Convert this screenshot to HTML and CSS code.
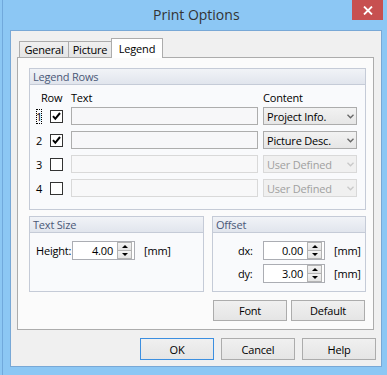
FILE: index.html
```html
<!DOCTYPE html>
<html lang="en">
  <head>
    <meta charset="UTF-8" />
    <title>Print Options</title>
    <link rel="stylesheet" href="styles.css">
  </head>
  <body>
    <div class="window">
      <div class="titlebar">
        <span class="titlebar__title">Print Options</span>
        <div class="titlebar__close">
          <svg width="10" height="9" viewBox="0 0 10 9">
            <path d="M1 0.5 L9 8.5 M9 0.5 L1 8.5" stroke="#fff" stroke-width="1.8" />
          </svg>
        </div>
      </div>

      <div class="client">
        <div class="tabs">
          <div class="tab tab--general">General</div>
          <div class="tab tab--picture">Picture</div>
          <div class="tab tab--legend tab--active">Legend</div>
        </div>

        <div class="pane">
          <!-- legend rows -->
          <div class="group group--rows">
            <div class="group__head">Legend Rows</div>
            <div class="rows">
              <div class="rows__head">
                <span class="rows__h-row">Row</span>
                <span class="rows__h-text">Text</span>
                <span>Content</span>
              </div>
              <div class="rows__list">
                <div class="row">
                  <div class="row__num"><span class="row__focus">1</span></div>
                  <div class="check">
                    <svg width="11" height="11" viewBox="0 0 11 11">
                      <path d="M2 5.2 L4.3 7.8 L9 2" fill="none" stroke="#000" stroke-width="2" />
                    </svg>
                  </div>
                  <div class="input"></div>
                  <div class="select">
                    <span>Project Info.</span>
                    <svg width="7" height="5" viewBox="0 0 7 5">
                      <path d="M0.5 0.8 L3.5 3.8 L6.5 0.8" fill="none" stroke="#666" stroke-width="1.3" />
                    </svg>
                  </div>
                </div>
                <div class="row">
                  <div class="row__num">2</div>
                  <div class="check">
                    <svg width="11" height="11" viewBox="0 0 11 11">
                      <path d="M2 5.2 L4.3 7.8 L9 2" fill="none" stroke="#000" stroke-width="2" />
                    </svg>
                  </div>
                  <div class="input"></div>
                  <div class="select">
                    <span>Picture Desc.</span>
                    <svg width="7" height="5" viewBox="0 0 7 5">
                      <path d="M0.5 0.8 L3.5 3.8 L6.5 0.8" fill="none" stroke="#666" stroke-width="1.3" />
                    </svg>
                  </div>
                </div>
                <div class="row">
                  <div class="row__num">3</div>
                  <div class="check"></div>
                  <div class="input input--disabled"></div>
                  <div class="select select--disabled">
                    <span>User Defined</span>
                    <svg width="7" height="5" viewBox="0 0 7 5">
                      <path d="M0.5 0.8 L3.5 3.8 L6.5 0.8" fill="none" stroke="#c8c8c8" stroke-width="1.3" />
                    </svg>
                  </div>
                </div>
                <div class="row">
                  <div class="row__num">4</div>
                  <div class="check"></div>
                  <div class="input input--disabled"></div>
                  <div class="select select--disabled">
                    <span>User Defined</span>
                    <svg width="7" height="5" viewBox="0 0 7 5">
                      <path d="M0.5 0.8 L3.5 3.8 L6.5 0.8" fill="none" stroke="#c8c8c8" stroke-width="1.3" />
                    </svg>
                  </div>
                </div>
              </div>
            </div>
          </div>

          <div class="groups">
            <!-- text size -->
            <div class="group group--size">
              <div class="group__head">Text Size</div>
              <div class="size">
                <div class="field">
                  <span class="field__label field__label--height">Height:</span>
                  <div class="spin spin--wide">
                    <span class="spin__value">4.00</span>
                    <div class="spin__btns">
                      <div class="spin__up"><i class="arrow-up"></i></div>
                      <div class="spin__down"><i class="arrow-down"></i></div>
                    </div>
                  </div>
                  <span class="field__unit">[mm]</span>
                </div>
              </div>
            </div>

            <!-- offset -->
            <div class="group group--offset">
              <div class="group__head">Offset</div>
              <div class="offset">
                <div class="field">
                  <span class="field__label">dx:</span>
                  <div class="spin">
                    <span class="spin__value">0.00</span>
                    <div class="spin__btns">
                      <div class="spin__up"><i class="arrow-up"></i></div>
                      <div class="spin__down"><i class="arrow-down"></i></div>
                    </div>
                  </div>
                  <span class="field__unit">[mm]</span>
                </div>
                <div class="field">
                  <span class="field__label">dy:</span>
                  <div class="spin">
                    <span class="spin__value">3.00</span>
                    <div class="spin__btns">
                      <div class="spin__up"><i class="arrow-up"></i></div>
                      <div class="spin__down"><i class="arrow-down"></i></div>
                    </div>
                  </div>
                  <span class="field__unit">[mm]</span>
                </div>
              </div>
            </div>
          </div>

          <div class="pane__actions">
            <button class="btn">Font</button>
            <button class="btn">Default</button>
          </div>
        </div>

        <div class="dialog__actions">
          <button class="btn btn--default">OK</button>
          <button class="btn">Cancel</button>
          <button class="btn">Help</button>
        </div>
      </div>
    </div>
  </body>
</html>
```

FILE: styles.css
```css
* {
  margin: 0;
  padding: 0;
  box-sizing: border-box;
}

html,
body {
  height: 100%;
}

body {
  background-color: #8cc7f4;
  color: #000;
  font-family: "Open Sans", "Noto Sans", sans-serif;
  font-size: 11px;
  letter-spacing: -0.2px;
  overflow: hidden;
}

.window {
  width: 387px;
  height: 375px;
  box-shadow: inset 2px 0 0 #8cc7f4, inset 3px 0 0 #71a9dc;
}

/* title bar */
.titlebar {
  display: flex;
  align-items: flex-start;
  height: 30px;
}
.titlebar__title {
  margin: 5px 0 0 153px;
  font-size: 14px;
  line-height: 20px;
  letter-spacing: 0;
  color: #333;
}
.titlebar__close {
  display: flex;
  align-items: center;
  justify-content: center;
  width: 31px;
  height: 20px;
  margin-left: auto;
  margin-right: 4px;
  background-color: #c75050;
}

/* client area */
.client {
  width: 372px;
  height: 337px;
  margin-left: 10px;
  padding: 7px 0 0 6px;
  border: 1px solid #78a8d6;
  background-color: #f0f0f0;
}

/* tabs */
.tabs {
  display: flex;
  align-items: flex-end;
  margin-left: 2px;
  position: relative;
  z-index: 1;
}
.tab {
  display: flex;
  align-items: center;
  justify-content: center;
  height: 16px;
  padding-top: 1px;
  border: 1px solid #acacac;
  border-bottom: 0;
  background: linear-gradient(#f0f0f0, #e5e5e5);
  line-height: 14px;
}
.tab + .tab {
  margin-left: -1px;
}
.tab--general {
  width: 50px;
}
.tab--picture {
  width: 44px;
}
.tab--legend {
  width: 52px;
}
.tab--active {
  height: 20px;
  padding-top: 0;
  margin-bottom: -1px;
  background: #fff;
}

.pane {
  width: 357px;
  height: 273px;
  padding: 10px 7px 0 11px;
  border: 1px solid #acacac;
  background-color: #fbfbfb;
}

/* group boxes */
.group {
  border: 1px solid #c5cbd7;
  background-color: #f9fafc;
}
.group__head {
  height: 16px;
  padding-left: 3px;
  border-bottom: 1px solid #c5cbd7;
  background: linear-gradient(#f1f3f7, #e1e5ed);
  color: #4a5877;
  line-height: 15px;
}
.group--rows {
  height: 142px;
}

.rows {
  padding: 5px 0 0 5px;
}
.rows__head {
  display: flex;
  height: 15px;
  margin-bottom: 2px;
  line-height: 15px;
}
.rows__h-row {
  width: 36px;
  padding-left: 6px;
}
.rows__h-text {
  width: 192px;
}
.rows__list {
  display: flex;
  flex-direction: column;
  gap: 6px;
}
.row {
  display: flex;
  align-items: center;
  height: 18px;
}
.row__num {
  width: 15px;
  padding-left: 1px;
  line-height: 15px;
}
.row__focus {
  display: inline-block;
  width: 6px;
  outline: 1px dotted #000;
  outline-offset: -1px;
}
.check {
  width: 13px;
  height: 13px;
  margin-right: 8px;
  border: 1px solid #333;
  background-color: #fff;
}
.check svg {
  display: block;
}
.input {
  width: 187px;
  height: 18px;
  margin-right: 5px;
  border: 1px solid #adadad;
  background-color: #f7f7f9;
}
.input--disabled {
  border-color: #d9d9d9;
  background-color: #f8f8f9;
}
.select {
  display: flex;
  align-items: center;
  justify-content: space-between;
  width: 94px;
  height: 18px;
  padding: 0 2px 0 3px;
  border: 1px solid #acacac;
  background: linear-gradient(#f2f2f2, #e6e6e6);
}
.select--disabled {
  border-color: #d9d9d9;
  background: #f0f0f0;
  color: #a0a0a0;
}

/* text size and offset */
.groups {
  display: flex;
  gap: 8px;
  margin-top: 6px;
}
.group--size {
  width: 175px;
  height: 76px;
}
.group--offset {
  width: 154px;
  height: 76px;
}
.size {
  padding: 8px 0 0 6px;
}
.offset {
  display: flex;
  flex-direction: column;
  gap: 4px;
  padding: 8px 0 0 25px;
}
.field {
  display: flex;
  align-items: center;
  height: 19px;
}
.field__label {
  width: 25px;
}
.field__label--height {
  width: 36px;
}
.field__unit {
  margin-left: 9px;
}

.spin {
  display: flex;
  align-items: center;
  width: 62px;
  height: 19px;
  padding-right: 2px;
  border: 1px solid #abadb3;
  background-color: #fff;
}
.spin--wide {
  width: 63px;
}
.spin__value {
  flex: 1;
  padding-right: 4px;
  text-align: right;
}
.spin__btns {
  display: flex;
  flex-direction: column;
  width: 15px;
  height: 17px;
}
.spin__up,
.spin__down {
  display: flex;
  align-items: center;
  justify-content: center;
  flex: 1;
  border: 1px solid #b3b3b3;
  background: linear-gradient(#f3f3f3, #e3e3e3);
}
.spin__down {
  border-top: 0;
}
.arrow-up,
.arrow-down {
  width: 0;
  height: 0;
  border-left: 3px solid transparent;
  border-right: 3px solid transparent;
}
.arrow-up {
  border-bottom: 3px solid #000;
}
.arrow-down {
  border-top: 3px solid #000;
}

/* buttons */
.btn {
  width: 74px;
  height: 21px;
  border: 1px solid #acacac;
  background: linear-gradient(#f0f0f0, #e5e5e5);
  color: #000;
  font: inherit;
  letter-spacing: inherit;
}
.btn--default {
  border-color: #3c8fe0;
}
.pane__actions {
  display: flex;
  justify-content: flex-end;
  gap: 4px;
  margin-top: 8px;
  margin-right: 1px;
}
.dialog__actions {
  display: flex;
  justify-content: flex-end;
  gap: 7px;
  margin-top: 8px;
  padding-right: 5px;
}
.dialog__actions .btn {
  height: 22px;
}
```
